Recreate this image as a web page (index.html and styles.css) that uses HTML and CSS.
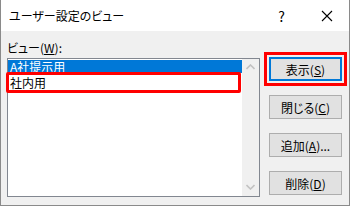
FILE: index.html
```html
<!DOCTYPE html>
<html lang="ja">
<head>
    <meta charset="UTF-8">
    <title>ユーザー設定のビュー</title>
    <link rel="stylesheet" href="styles.css">
</head>
<body>
    <div class="dialog">
        <div class="titlebar">
            <span class="title">ユーザー設定のビュー</span>
            <span class="help">?</span>
            <svg class="close" width="12" height="12" viewBox="0 0 12 12">
                <path d="M1 1 L11 11 M11 1 L1 11" stroke="#000" stroke-width="1.1" fill="none"/>
            </svg>
        </div>
        <div class="content">
            <div class="left">
                <div class="label">ビュー(<u>W</u>):</div>
                <div class="listbox">
                    <div class="items">
                        <div class="item selected">A社提示用</div>
                        <div class="item">社内用</div>
                        <!-- annotation box -->
                        <div class="mark"></div>
                    </div>
                    <div class="scrollbar">
                        <svg width="9" height="6" viewBox="0 0 9 6">
                            <path d="M0.5 5 L4.5 1 L8.5 5" stroke="#c2c2c2" stroke-width="1.6" fill="none"/>
                        </svg>
                        <svg width="9" height="6" viewBox="0 0 9 6">
                            <path d="M0.5 1 L4.5 5 L8.5 1" stroke="#c2c2c2" stroke-width="1.6" fill="none"/>
                        </svg>
                    </div>
                </div>
            </div>
            <div class="buttons">
                <button class="btn default">表示(<u>S</u>)</button>
                <button class="btn">閉じる(<u>C</u>)</button>
                <button class="btn">追加(<u>A</u>)...</button>
                <button class="btn">削除(<u>D</u>)</button>
            </div>
        </div>
    </div>
</body>
</html>
```

FILE: styles.css
```css
* {
    box-sizing: border-box;
    margin: 0;
    padding: 0;
}

body {
    width: 351px;
    height: 206px;
    font-family: 'Noto Sans CJK JP', 'Noto Sans', sans-serif;
    font-size: 12px;
    font-feature-settings: "palt";
    color: #000;
    background: #fff;
}

.dialog {
    width: 350px;
    height: 206px;
    border: 1px solid #8a8a8a;
    border-top: none;
    display: flex;
    flex-direction: column;
}

.titlebar {
    height: 31px;
    background: #fff;
    display: flex;
    align-items: center;
    padding-left: 8px;
}

.title {
    flex: 1;
    font-size: 12px;
    line-height: 16px;
}

.help {
    font-size: 14px;
    line-height: 16px;
    margin-right: 36px;
}

.close {
    margin-right: 16px;
}

.content {
    flex: 1;
    background: #f0f0f0;
    display: flex;
    padding: 9px 0 0 6px;
}

.label {
    line-height: 16px;
    height: 18px;
}

.listbox {
    width: 253px;
    height: 139px;
    border: 1px solid #828790;
    background: #fff;
    display: flex;
}

.items {
    flex: 1;
    position: relative;
}

.item {
    height: 17px;
    line-height: 15px;
    padding: 2px 0 0 2px;
    white-space: nowrap;
}

.item.selected {
    background: #0078d7;
    color: #fff;
    margin-top: 1px;
    height: 13px;
    line-height: 13px;
    padding-top: 0;
}

.mark {
    position: absolute;
    left: -2px;
    top: 13px;
    width: 235px;
    height: 21px;
    border: 3px solid #ff0000;
    border-radius: 2px;
}

.scrollbar {
    width: 17px;
    background: #f0f0f0;
    display: flex;
    flex-direction: column;
    justify-content: space-between;
    align-items: center;
    padding: 5px 0 6px;
}

.buttons {
    display: flex;
    flex-direction: column;
    gap: 14px;
    margin: 17px 0 0 9px;
}

.btn {
    width: 73px;
    height: 24px;
    background: #e1e1e1;
    border: 1px solid #adadad;
    font-family: inherit;
    font-size: 12px;
    font-feature-settings: "palt";
    color: #000;
}

.btn.default {
    border: 2px solid #0078d7;
    outline: 3px solid #ff0000;
    outline-offset: 2px;
}
```
